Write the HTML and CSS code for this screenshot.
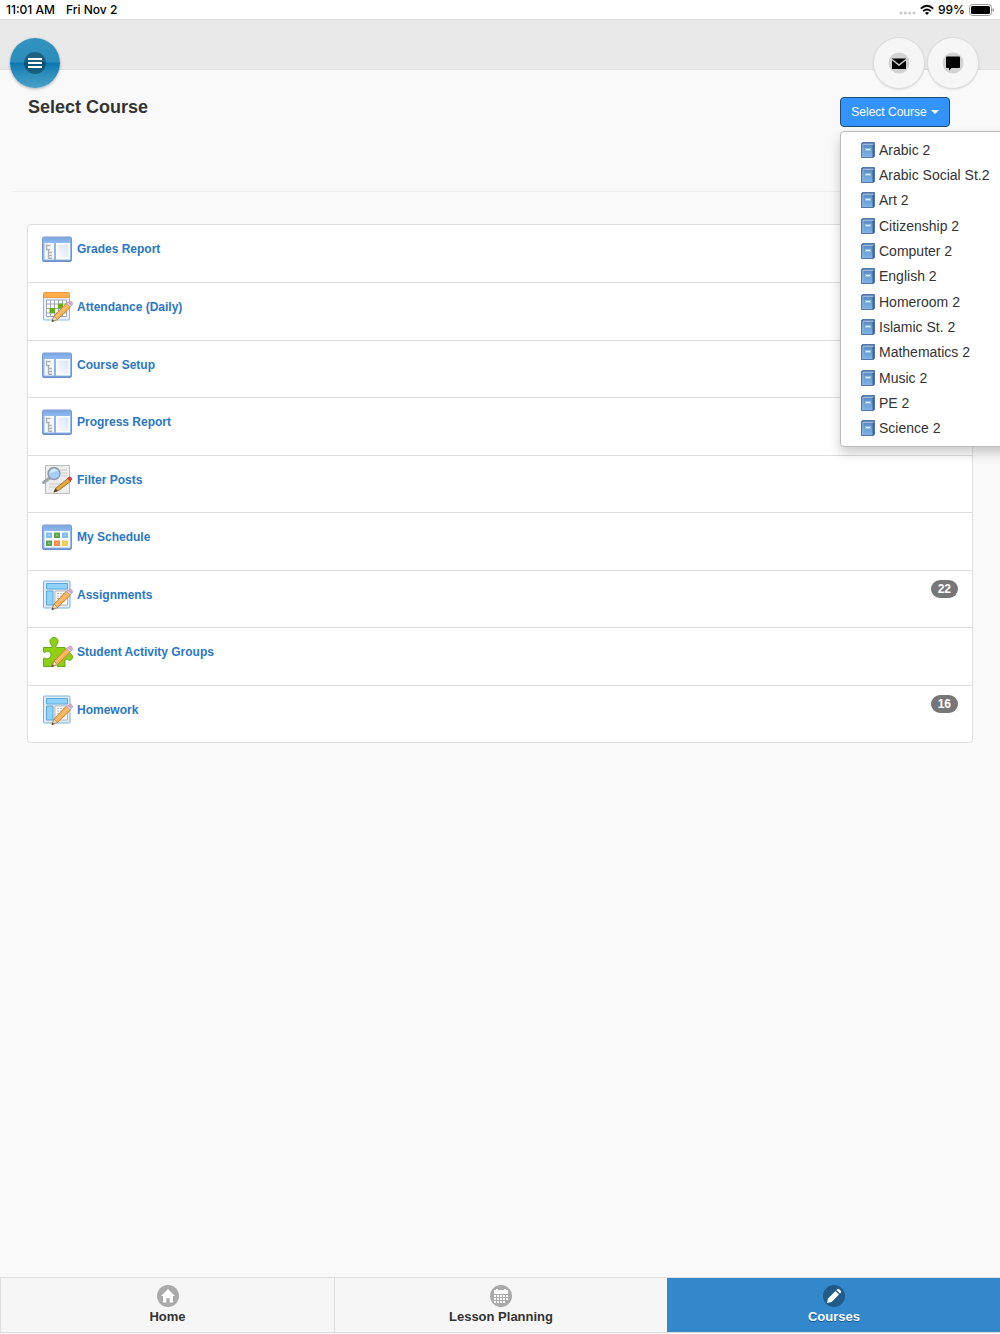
FILE: index.html
```html
<!DOCTYPE html>
<html lang="en">
<head>
    <meta charset="UTF-8">
    <meta name="viewport" content="width=device-width, initial-scale=1.0">
    <title>Select Course</title>
    <link rel="stylesheet" href="styles.css">
</head>
<body>

<!-- Shared icons -->
<svg class="icon-defs" aria-hidden="true">
    <defs>
        <linearGradient id="window-bar" x1="0" y1="0" x2="0" y2="1">
            <stop offset="0" stop-color="#7ba5de"/>
            <stop offset="1" stop-color="#8fbaf0"/>
        </linearGradient>
        <linearGradient id="window-pane" x1="1" y1="0" x2="0" y2="1">
            <stop offset="0" stop-color="#d9e4f5"/>
            <stop offset="1" stop-color="#fbfcff"/>
        </linearGradient>
        <linearGradient id="book-cover" x1="0" y1="0" x2="0" y2="1">
            <stop offset="0" stop-color="#5b8cc6"/>
            <stop offset="1" stop-color="#7fb4e4"/>
        </linearGradient>
        <symbol id="pencil" viewBox="0 0 32 32">
            <path d="M11 30.500l2-5.500L25.500 12l4 4L16.500 28.500z" fill="#fbb055" stroke="#b9772c" stroke-width=".8"/>
            <path d="M14.500 26.500L27.500 14" stroke="#ffd28c" stroke-width="1"/>
            <path d="M25.500 12.500l1.500-1.500 3.500 3.500-1.500 1.500z" fill="#d0d2da" stroke="#9c9fa8" stroke-width=".6"/>
            <path d="M27.500 11l1-.8q1.300-.5 2.300.7t.7 2.300l-.7 1.100z" fill="#e8a3d4" stroke="#c489b4" stroke-width=".6"/>
            <path d="M11 30.500l2-5.500 3.500 3.500z" fill="#efd9b0" stroke="#9a7a55" stroke-width=".6"/>
            <path d="M10.600 31l1-2.600 1.600 1.500z" fill="#444"/>
        </symbol>
        <symbol id="report" viewBox="0 0 32 32">
            <rect x="1.500" y="4" width="29" height="24.500" rx="1.500" fill="#8fb6ea" stroke="#7796ce"/>
            <rect x="2" y="4.500" width="28" height="5" fill="url(#window-bar)"/>
            <path d="M3.500 10H13v16.500H3.500z" fill="#f7f9fd"/>
            <path d="M15 10h14v16.500H15z" fill="#fff"/>
            <path d="M16.500 11.500h11v13.500h-11z" fill="url(#window-pane)"/>
            <path d="M5.500 11.500v5h3.500M5.500 12.500h4M7.500 17v8.500M7.500 19.500h3.500M7.500 22.500h3.500M7.500 25.300h3.500" fill="none" stroke="#adb0b5" stroke-width="1.400"/>
            <path d="M2 28h28" stroke="#6387c4" stroke-width="1"/>
        </symbol>
        <symbol id="attendance" viewBox="0 0 32 32">
            <rect x="2.500" y="2" width="26" height="27" rx="1" fill="#e8f1fa" stroke="#8dbbe0"/>
            <rect x="2.500" y="1.500" width="26" height="5" rx="1" fill="#ffae4d" stroke="#f09a44"/>
            <path d="M5.500 9h20v16.500h-20zM9.500 9v16.500M13.500 9v16.500M17.500 9v16.500M21.500 9v16.500M5.500 13h20M5.500 17.500h20M5.500 22h20" fill="#fff" stroke="#959fab" stroke-width=".9"/>
            <path d="M8.500 17h5.500v5H8.500zM17 12.500h5v5h-5z" fill="#67ad1b"/>
            <use href="#pencil"/>
        </symbol>
        <symbol id="filter" viewBox="0 0 32 32">
            <path d="M4.500 1.500h24v28h-24z" fill="#ededed" stroke="#bdbdbd"/>
            <path d="M19 6h7M20 9h6M20 12h6M8 20h12M8 23h9" stroke="#ccc"/>
            <path d="M9.500 13.500L2.500 18.500" stroke="#9da3ab" stroke-width="3" stroke-linecap="round"/>
            <circle cx="13" cy="9.500" r="6" fill="#a5cdf5" stroke="#8c97a8" stroke-width="1.400"/>
            <path d="M9 9.500q0-4 4.500-4.500 2.500.5 3 2-4.500-.5-7.500 2.500z" fill="#deefff"/>
            <path d="M13 28l2-4L27.500 14l2.500 3-12.500 9.500z" fill="#e8a83a" stroke="#8a611f" stroke-width=".8"/>
            <path d="M26.500 14.500l1.500-1.500q2.500-.5 3 2l-1.800 2z" fill="#dc3f36" stroke="#aa2f28" stroke-width=".6"/>
            <path d="M12.500 28.500l2-4 2.500 2.500z" fill="#4a4238"/>
        </symbol>
        <symbol id="schedule" viewBox="0 0 32 32">
            <rect x="1.500" y="4" width="29" height="24.500" rx="1.500" fill="#8fb6ea" stroke="#7796ce"/>
            <rect x="2" y="4.500" width="28" height="5" fill="url(#window-bar)"/>
            <path d="M3.500 10h25.500v16.500H3.500z" fill="#f7faff"/>
            <path d="M5 11.500h6V17H5zM21 11.500h6V17h-6z" fill="#82bdf5"/>
            <path d="M13 11.500h6V17h-6zM5 19.500h6V25H5z" fill="#5aa651"/>
            <path d="M13 19.500h6V25h-6z" fill="#f98b42"/>
            <path d="M21 19.500h6V25h-6z" fill="#f2cb4a"/>
            <path d="M7 13.500h2V15H7zM15 13.500h2V15h-2zM23 13.500h2V15h-2zM7 21.500h2V23H7zM15 21.500h2V23h-2zM23 21.500h2V23h-2z" fill="#fff" opacity=".3"/>
            <path d="M2 28h28" stroke="#6387c4" stroke-width="1"/>
        </symbol>
        <symbol id="assignment" viewBox="0 0 32 32">
            <rect x="2.500" y="2" width="26.500" height="27" rx="1" fill="#e2ebf2" stroke="#78b4e0"/>
            <path d="M5.500 4.500h21v5.500h-21zM5.500 12H12v14H5.500z" fill="#91d2fa" stroke="#5ba9dc"/>
            <path d="M14 12h12.500v14H14z" fill="#fafafa" stroke="#b3b7ba"/>
            <path d="M16 14.500h8.500M16 17h8.500M16 19.500h8.500M16 22h8.500" stroke="#b8b8b8" stroke-dasharray="2 1"/>
            <use href="#pencil"/>
        </symbol>
        <symbol id="puzzle" viewBox="0 0 32 32">
            <path d="M2.500 11.500h8q1.300-1 0-2.500c-3.500-4.500-.5-7.500 2.500-7.500s6 3 2.500 7.500q-1.300 1.500 0 2.500h8.500v6.500q1 1.300 2.500 0c3-1.500 5 .5 5 3s-2.500 4.500-5 2.500q-1.500-1-2.500.5v6.500h-7.500q0-5-3-5t-3 5h-8v-8q1-1 2 0c2.500 1 5.500-.5 5.500-3.500s-3-4.500-5.500-3q-1 1-2 0z" fill="#8fcf16" stroke="#67a51a"/>
            <use href="#pencil"/>
        </symbol>
        <symbol id="book" viewBox="0 0 14 16">
            <path d="M1.500.5h12v14l-1 1H.5v-14z" fill="#3a629b" stroke="#5377aa"/>
            <path d="M2 1.500h11L12 3H1z" fill="#9db9dc"/>
            <path d="M1 3h10.500v12H1z" fill="url(#book-cover)"/>
            <path d="M2 3v12" stroke="#8db3dc"/>
            <path d="M4 6h6v3H4z" fill="#93c0ea"/>
            <path d="M5 7.500h4" stroke="#dceeff"/>
        </symbol>
    </defs>
</svg>

<div class="status-bar">
    <div class="status-group">
        <span>11:01 AM</span>
        <span>Fri Nov 2</span>
    </div>
    <div class="status-signal">
        <svg width="17" height="12" viewBox="0 0 17 12" fill="#c8c8c8" aria-hidden="true">
            <circle cx="2" cy="9" r="1.500"/><circle cx="6.300" cy="9" r="1.500"/><circle cx="10.600" cy="9" r="1.500"/><circle cx="15" cy="9" r="1.500"/>
        </svg>
        <svg width="14" height="12" viewBox="0 0 14 12" fill="none" stroke="#000" stroke-width="1.900" aria-hidden="true">
            <path d="M.8 4.600q6.200-5.600 12.400 0M3.100 7.100q3.900-3.400 7.800 0"/>
            <path d="M4.900 8.800q2.100-1.600 4.200 0L7 11z" fill="#000" stroke="none"/>
        </svg>
        <span>99%</span>
        <svg width="25" height="12" viewBox="0 0 25 12" aria-hidden="true">
            <rect x=".5" y=".5" width="22" height="11" rx="3" fill="#fff" stroke="#9a9a9a"/>
            <rect x="2" y="2" width="19" height="8" rx="1.500"/>
            <path d="M23.500 4q1.500.5 1.500 2t-1.500 2z" fill="#9a9a9a"/>
        </svg>
    </div>
</div>

<header>
    <button type="button" class="round-button menu-button" aria-label="Menu">
        <svg width="22" height="22" viewBox="0 0 22 22" aria-hidden="true">
            <circle cx="11" cy="11" r="11" fill="#000" opacity=".32"/>
            <path d="M4 7h14M4 11h14M4 15h14" stroke="#fff" stroke-width="2"/>
        </svg>
    </button>
    <div class="header-actions">
        <button type="button" class="round-button" aria-label="Messages">
            <svg width="22" height="22" viewBox="0 0 22 22" aria-hidden="true">
                <circle cx="11" cy="11" r="10.500" fill="#d2d2d2"/>
                <path d="M4 6.500h14V17H4z"/>
                <path d="M4 7.500l7 5.500 7-5.500" fill="none" stroke="#d2d2d2" stroke-width="1.400"/>
            </svg>
        </button>
        <button type="button" class="round-button" aria-label="Chat">
            <svg width="22" height="22" viewBox="0 0 22 22" aria-hidden="true">
                <circle cx="11" cy="11" r="10.500" fill="#d2d2d2"/>
                <path d="M5 4.500h12q1 0 1 1V15q0 1-1 1H9.500L7 18.500V16H5q-1 0-1-1V5.500q0-1 1-1z"/>
            </svg>
        </button>
    </div>
</header>

<main>
    <div class="page-head">
        <h1>Select Course</h1>
        <div class="dropdown">
            <button type="button" class="dropdown-button" aria-expanded="true" aria-controls="course-menu">Select Course <span class="caret"></span></button>
            <ul class="dropdown-menu" id="course-menu">
                <li><a href="#"><svg class="book"><use href="#book"/></svg>Arabic 2</a></li>
                <li><a href="#"><svg class="book"><use href="#book"/></svg>Arabic Social St.2</a></li>
                <li><a href="#"><svg class="book"><use href="#book"/></svg>Art 2</a></li>
                <li><a href="#"><svg class="book"><use href="#book"/></svg>Citizenship 2</a></li>
                <li><a href="#"><svg class="book"><use href="#book"/></svg>Computer 2</a></li>
                <li><a href="#"><svg class="book"><use href="#book"/></svg>English 2</a></li>
                <li><a href="#"><svg class="book"><use href="#book"/></svg>Homeroom 2</a></li>
                <li><a href="#"><svg class="book"><use href="#book"/></svg>Islamic St. 2</a></li>
                <li><a href="#"><svg class="book"><use href="#book"/></svg>Mathematics 2</a></li>
                <li><a href="#"><svg class="book"><use href="#book"/></svg>Music 2</a></li>
                <li><a href="#"><svg class="book"><use href="#book"/></svg>PE 2</a></li>
                <li><a href="#"><svg class="book"><use href="#book"/></svg>Science 2</a></li>
            </ul>
        </div>
    </div>

    <ul class="link-list">
        <li><a href="#"><svg class="list-icon"><use href="#report"/></svg>Grades Report</a></li>
        <li><a href="#"><svg class="list-icon"><use href="#attendance"/></svg>Attendance (Daily)</a></li>
        <li><a href="#"><svg class="list-icon"><use href="#report"/></svg>Course Setup</a></li>
        <li><a href="#"><svg class="list-icon"><use href="#report"/></svg>Progress Report</a></li>
        <li><a href="#"><svg class="list-icon"><use href="#filter"/></svg>Filter Posts</a></li>
        <li><a href="#"><svg class="list-icon"><use href="#schedule"/></svg>My Schedule</a></li>
        <li><a href="#"><svg class="list-icon"><use href="#assignment"/></svg>Assignments</a><span class="count">22</span></li>
        <li><a href="#"><svg class="list-icon"><use href="#puzzle"/></svg>Student Activity Groups</a></li>
        <li><a href="#"><svg class="list-icon"><use href="#assignment"/></svg>Homework</a><span class="count">16</span></li>
    </ul>
</main>

<nav class="tab-bar">
    <a href="#">
        <svg width="22" height="22" viewBox="0 0 22 22" aria-hidden="true">
            <circle cx="11" cy="11" r="11" fill="#aaa"/>
            <path d="M11 4l7 7h-2v6.500h-3.500V13h-3v4.500H6V11H4z" fill="#fff"/>
        </svg>
        Home
    </a>
    <a href="#">
        <svg width="22" height="22" viewBox="0 0 22 22" aria-hidden="true">
            <circle cx="11" cy="11" r="11" fill="#aaa"/>
            <path d="M4 5h2V4h2v1h6V4h2v1h2v4H4z" fill="#fff"/>
            <path d="M4 10h2v2H4zM7 10h2v2H7zM10 10h2v2h-2zM13 10h2v2h-2zM16 10h2v2h-2zM4 13h2v2H4zM7 13h2v2H7zM10 13h2v2h-2zM13 13h2v2h-2zM16 13h2v2h-2zM4 16h2v2H4zM7 16h2v2H7zM10 16h2v2h-2zM13 16h2v2h-2z" fill="#fff"/>
        </svg>
        Lesson Planning
    </a>
    <a href="#" class="active">
        <svg width="22" height="22" viewBox="0 0 22 22" aria-hidden="true">
            <circle cx="11" cy="11" r="11" fill="#225b88"/>
            <path d="M4 18l1-4.500 7.500-7.500 3.500 3.500-7.500 7.500zM13.500 5l1-1q1-.5 2 .5l1 1q1 1 .5 2l-1 1z" fill="#fff"/>
        </svg>
        Courses
    </a>
</nav>

</body>
</html>
```
FILE: styles.css
```css
* {
    box-sizing: border-box;
}
body {
    font-family: "Liberation Sans", Arial, sans-serif;
    margin: 0;
    padding: 0 0 1px;
    min-height: 100vh;
    display: flex;
    flex-direction: column;
    background-color: #f9f9f9;
    color: #333;
    overflow-x: hidden;
}
ul {
    list-style: none;
    margin: 0;
    padding: 0;
}
a {
    text-decoration: none;
}
svg {
    flex: none;
}
.icon-defs {
    position: absolute;
    width: 0;
    height: 0;
}
.status-bar {
    display: flex;
    justify-content: space-between;
    align-items: center;
    height: 19px;
    padding: 0 6px;
    background-color: white;
    color: #000;
    font-family: Inter, sans-serif;
    font-size: 12px;
    font-weight: 500;
}
.status-group {
    display: flex;
    gap: 11px;
}
.status-signal {
    display: flex;
    align-items: center;
    gap: 4px;
}
header {
    display: flex;
    justify-content: space-between;
    align-items: flex-start;
    height: 51px;
    padding: 18px 22px 0 10px;
    background-color: #e9e9e9;
    border-top: 1px solid #ddd;
    border-bottom: 1px solid #ddd;
}
.header-actions {
    display: flex;
    gap: 4px;
}
.round-button {
    display: flex;
    justify-content: center;
    align-items: center;
    width: 50px;
    height: 50px;
    padding: 0;
    border: none;
    border-radius: 50%;
    background-color: #f6f6f6;
    box-shadow: 0 0 0 1px #ddd, 0 1px 3px rgba(0, 0, 0, 0.2);
    cursor: pointer;
}
.menu-button {
    background: linear-gradient(#3093c0 0%, #2a8dbb 48%, #0a78b0 50%, #2d8ebc 72%, #479fc6 100%);
    box-shadow: 0 1px 3px rgba(0, 0, 0, 0.3);
}
main {
    flex: 1;
}
.page-head {
    display: flex;
    justify-content: space-between;
    align-items: center;
    margin: 0 12px;
    padding: 27px 38px 64px 16px;
    border-bottom: 1px solid #eee;
}
h1 {
    margin: 0;
    font-size: 18px;
    line-height: 20px;
    padding-bottom: 10px;
}
.dropdown {
    position: relative;
}
.dropdown-button {
    display: flex;
    justify-content: center;
    align-items: center;
    gap: 4px;
    width: 110px;
    height: 30px;
    padding: 0;
    border: 1px solid #204d74;
    border-radius: 4px;
    background-color: #3394ff;
    color: white;
    font-family: inherit;
    font-size: 12px;
    cursor: pointer;
}
.caret {
    border-top: 4px solid white;
    border-left: 4px solid transparent;
    border-right: 4px solid transparent;
}
.dropdown-menu {
    position: absolute;
    top: 100%;
    left: 0;
    z-index: 10;
    display: grid;
    grid-auto-rows: 1fr;
    width: 180px;
    min-height: 316px;
    margin-top: 4px;
    padding: 5px 0;
    background-color: white;
    border: 1px solid #bbb;
    border-radius: 4px;
    box-shadow: 0 6px 12px rgba(0, 0, 0, 0.2);
}
.dropdown-menu a {
    display: flex;
    align-items: center;
    gap: 4px;
    height: 100%;
    padding: 0 20px;
    color: #333;
    font-size: 14px;
    white-space: nowrap;
}
.dropdown-menu a:hover {
    background-color: #f5f5f5;
}
.book {
    width: 14px;
    height: 16px;
}
.link-list {
    display: grid;
    grid-auto-rows: 1fr;
    min-height: 519px;
    margin: 32px 27px;
    background-color: white;
    border: 1px solid #ddd;
    border-radius: 4px;
}
.link-list li {
    display: flex;
    justify-content: space-between;
    align-items: flex-start;
    padding: 8px 14px 8px 13px;
}
.link-list li + li {
    border-top: 1px solid #ddd;
}
.link-list a {
    display: flex;
    align-items: center;
    gap: 4px;
    color: #2a77c5;
    font-size: 12px;
    font-weight: bold;
}
.link-list a:hover {
    text-decoration: underline;
}
.list-icon {
    width: 32px;
    height: 32px;
}
.count {
    min-width: 27px;
    margin-top: 1px;
    padding: 0 7px;
    border-radius: 9px;
    background-color: #777;
    color: white;
    font-size: 12px;
    font-weight: bold;
    line-height: 18px;
    text-align: center;
}
.tab-bar {
    display: grid;
    grid-template-columns: repeat(3, 1fr);
    border: 1px solid #ddd;
    border-right: none;
}
.tab-bar a {
    display: flex;
    flex-direction: column;
    align-items: center;
    gap: 1px;
    padding: 7px 0;
    background-color: #f6f6f6;
    color: #333;
    font-size: 13px;
    font-weight: bold;
    line-height: 17px;
}
.tab-bar a + a {
    border-left: 1px solid #ddd;
}
.tab-bar .active {
    background-color: #38c;
    border-left-color: #38c;
    color: white;
    text-shadow: 0 1px 0 #059;
}
```
